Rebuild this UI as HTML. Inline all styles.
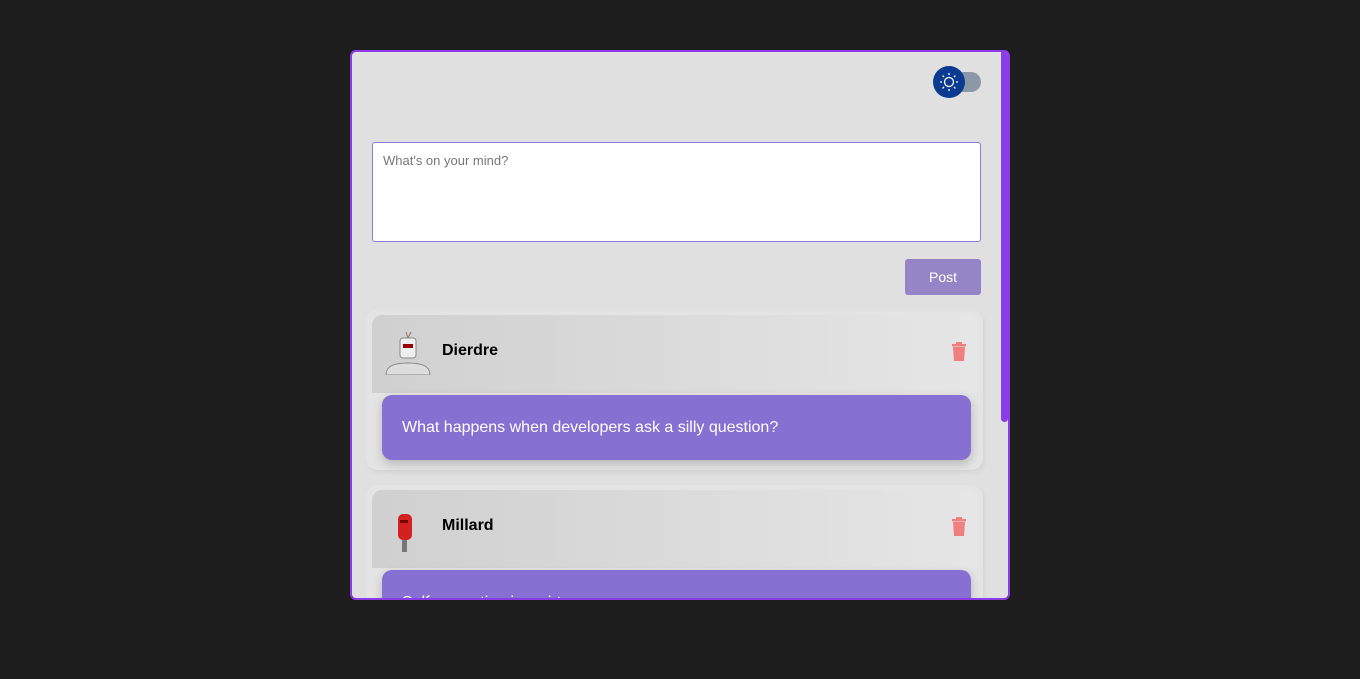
<!DOCTYPE html>
<html><head><style>
body{margin:0;background:#1d1d1d;width:1360px;height:679px;overflow:hidden;font-family:"Liberation Sans",sans-serif}
.app{position:absolute;left:350px;top:50px;width:656px;height:546px;border:2px solid #8b3be8;border-radius:6px;background:#e0e0e0;overflow:hidden}
.sb{position:absolute;right:0;top:0;width:7px;height:370px;background:#8b3be8;border-radius:0 0 4px 4px}
.track{position:absolute;left:601px;top:20px;width:28px;height:20px;border-radius:10px;background:#8a98a8}
.knob{position:absolute;left:581px;top:14px;width:32px;height:32px;border-radius:50%;background:#0b3b91}
textarea{position:absolute;left:20px;top:90px;width:609px;height:100px;box-sizing:border-box;border:1px solid #8a7fd0;border-radius:3px;background:#fff;padding:10px;font:13px "Liberation Sans",sans-serif;resize:none;color:#777;outline:none}
.post{position:absolute;left:553px;top:207px;width:76px;height:36px;background:#9585c6;border-radius:3px;color:#fff;font-size:14px;text-align:center;line-height:36px}
.card{position:absolute;left:14px;width:617px;height:160px;border-radius:12px;background:#e4e4e4;box-shadow:2px 3px 4px rgba(0,0,0,.05)}
.hd{position:absolute;left:6px;top:5px;right:5px;height:78px;border-radius:10px 10px 0 0;background:linear-gradient(90deg,#d0d0d0,#e6e6e6)}
.name{position:absolute;left:70px;top:27px;font-weight:bold;font-size:16px;color:#000}
.trash{position:absolute;left:579px;top:27px}
.msg{position:absolute;left:16px;top:85px;width:589px;height:65px;border-radius:10px;background:#8670d2;box-shadow:0 4px 10px rgba(0,0,0,.2);color:#fff;font-size:16px;line-height:65px;padding-left:20px;box-sizing:border-box}
</style></head><body>
<div class="app">
<div class="track"></div>
<div class="knob"><svg width="32" height="32" viewBox="0 0 32 32" fill="none" stroke="#fff" stroke-width="1.3"><circle cx="16" cy="16" r="4.5"/><path d="M16 7v2M16 23v2M7 16h2M23 16h2M9.6 9.6l1.4 1.4M21 21l1.4 1.4M9.6 22.4l1.4-1.4M21 11l1.4-1.4"/></svg></div>
<textarea>What's on your mind?</textarea>
<div class="post">Post</div>
<div class="card" style="top:258px">
<div class="hd"><svg style="position:absolute;left:12px;top:15px" width="48" height="45" viewBox="0 0 48 45"><rect x="16" y="8" width="16" height="20" rx="3" fill="#eee" stroke="#888"/><rect x="19" y="14" width="10" height="4" fill="#900"/><path d="M2 45c0-8 6-12 22-12s22 4 22 12z" fill="#ddd" stroke="#888"/><path d="M24 8l-2-6M24 8l3-6" stroke="#876"/></svg>
<div class="name">Dierdre</div>
<svg class="trash" width="16" height="19" viewBox="0 0 16 19"><rect x="1" y="2" width="14" height="2.5" fill="#f08080"/><rect x="5" y="0" width="6" height="2" fill="#f08080"/><path d="M2 5h12l-1 14H3z" fill="#f08080"/></svg></div>
<div class="msg">What happens when developers ask a silly question?</div>
</div>
<div class="card" style="top:433px">
<div class="hd"><svg style="position:absolute;left:20px;top:22px" width="26" height="42" viewBox="0 0 26 42"><rect x="6" y="2" width="14" height="26" rx="5" fill="#d32020"/><rect x="10" y="28" width="5" height="12" fill="#777"/><rect x="8" y="8" width="8" height="3" fill="#700"/></svg>
<div class="name">Millard</div>
<svg class="trash" width="16" height="19" viewBox="0 0 16 19"><rect x="1" y="2" width="14" height="2.5" fill="#f08080"/><rect x="5" y="0" width="6" height="2" fill="#f08080"/><path d="M2 5h12l-1 14H3z" fill="#f08080"/></svg></div>
<div class="msg">Self-promotion is a virtue</div>
</div>
<div class="sb"></div>
</div>
</body></html>
